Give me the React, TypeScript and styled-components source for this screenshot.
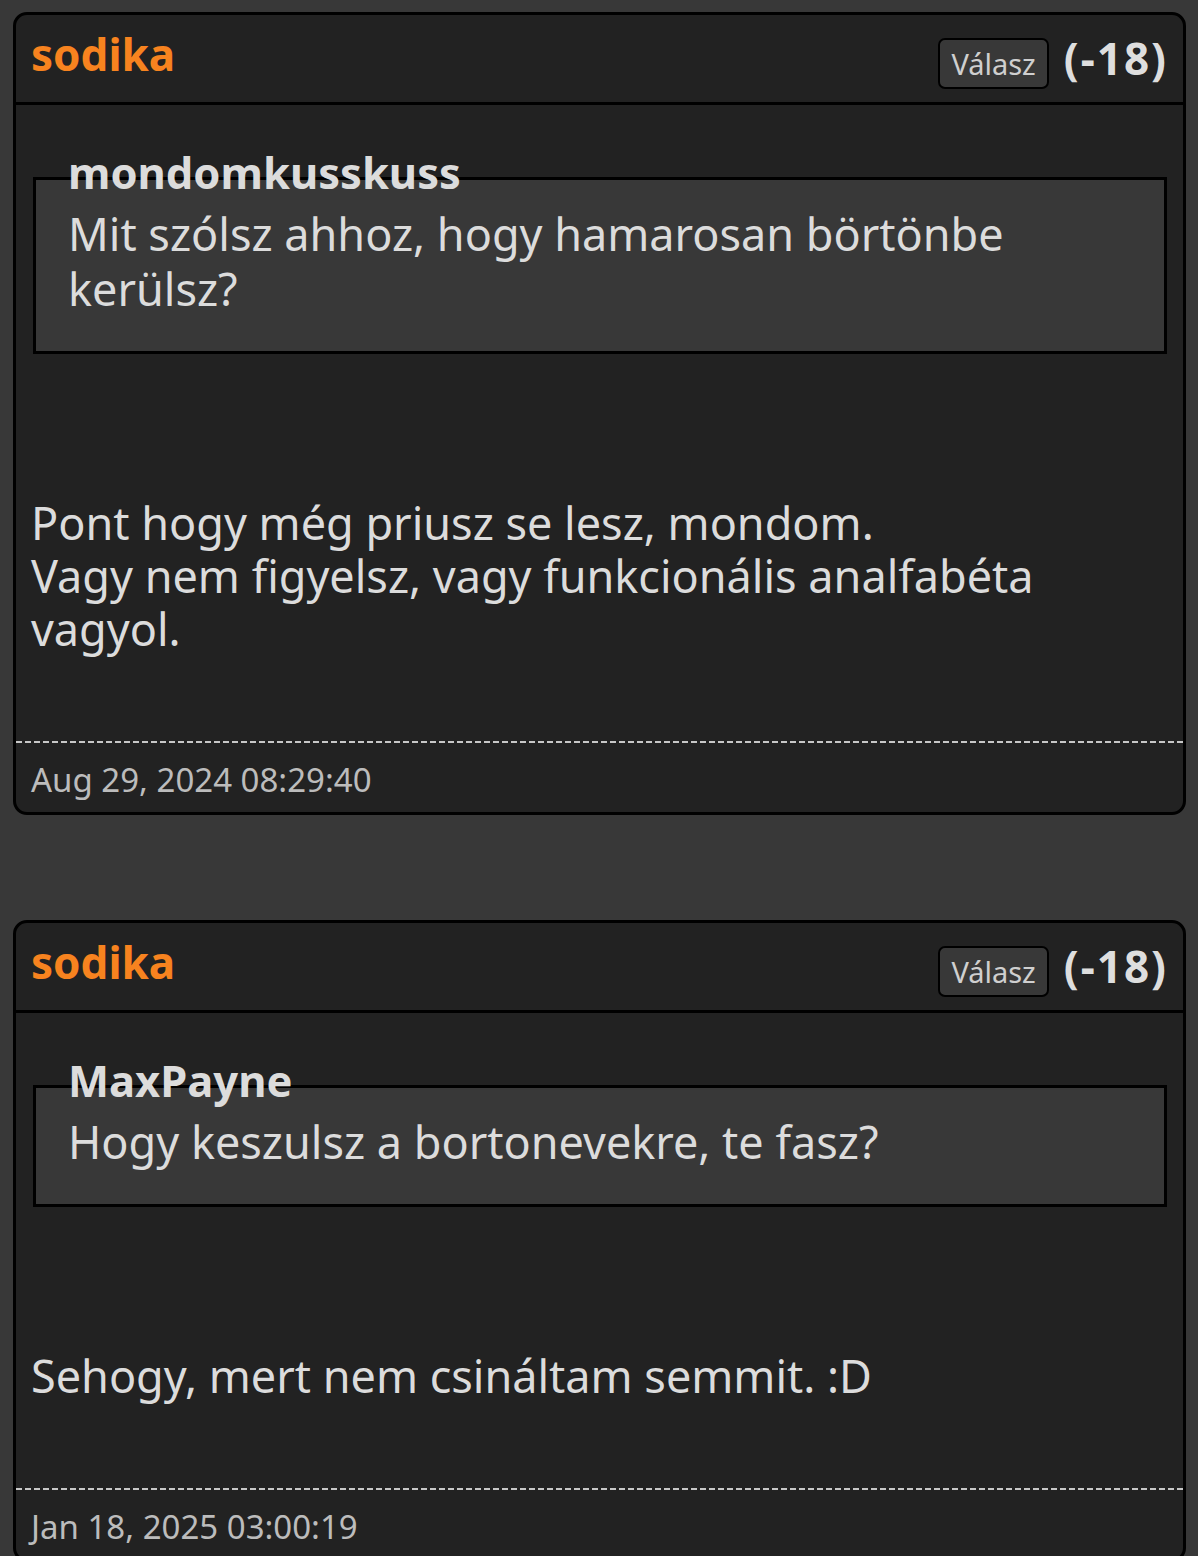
import React from "react";
import styled, { createGlobalStyle } from "styled-components";

const GlobalStyle = createGlobalStyle`
  html, body {
    margin: 0;
    padding: 0;
    background: #383838;
  }
  body {
    font-family: "Noto Sans", Roboto, "Liberation Sans", sans-serif;
    color: #dcdcdc;
  }
`;

const Page = styled.main`
  display: flex;
  flex-direction: column;
  gap: 105px;
  padding: 12px 12px 0 13px;
`;

const Card = styled.article`
  background: #222222;
  border: 3px solid #000;
  border-radius: 14px;
  overflow: hidden;
`;

const Header = styled.header`
  display: flex;
  align-items: center;
  height: 87px;
  padding: 0 15px 0 15px;
  border-bottom: 3px solid #000;
`;

const Author = styled.span`
  flex: 1;
  color: #f7831f;
  font-weight: 700;
  font-size: 44px;
  line-height: 44px;
  margin-bottom: 9px;
`;

const ReplyButton = styled.button`
  font-family: inherit;
  background: #383838;
  color: #cfcfcf;
  border: 2px solid #000;
  border-radius: 7px;
  font-size: 29px;
  line-height: 1;
  height: 51px;
  padding: 0 11px;
  margin-top: 9px;
  cursor: pointer;
`;

const Score = styled.span`
  color: #dedede;
  font-weight: 700;
  font-size: 44px;
  line-height: 44px;
  letter-spacing: 2px;
  margin-left: 15px;
  margin-bottom: 2px;
`;

const Body = styled.div`
  padding: 0 16px 0 15px;
`;

const QuoteAuthor = styled.div`
  font-weight: 700;
  font-size: 43.5px;
  line-height: 55px;
  color: #dcdcdc;
  margin: 40px 0 -23px 37px;
`;

const QuoteBox = styled.blockquote`
  margin: 0 0 0 2px;
  background: #383838;
  border: 3px solid #000;
  padding: 26px 30px 35px 32px;
  font-size: 45px;
  line-height: 55px;
  color: #dcdcdc;
`;

const Message = styled.p`
  margin: 142px 0 86px 0;
  font-size: 45px;
  line-height: 53px;
  color: #dcdcdc;
`;

const Divider = styled.div`
  height: 2px;
  margin: 0 -16px 0 -15px;
  background: repeating-linear-gradient(
    to right,
    #c8c8c8 0 6px,
    transparent 6px 9px
  );
`;

const Timestamp = styled.div`
  font-size: 33px;
  line-height: 40px;
  color: #bcbcbc;
  padding: 17px 0 12px 0;
`;

type Post = {
  author: string;
  score: string;
  quoteAuthor: string;
  quote: string;
  lines: string[];
  date: string;
};

const posts: Post[] = [
  {
    author: "sodika",
    score: "(-18)",
    quoteAuthor: "mondomkusskuss",
    quote: "Mit szólsz ahhoz, hogy hamarosan börtönbe kerülsz?",
    lines: [
      "Pont hogy még priusz se lesz, mondom.",
      "Vagy nem figyelsz, vagy funkcionális analfabéta vagyol.",
    ],
    date: "Aug 29, 2024 08:29:40",
  },
  {
    author: "sodika",
    score: "(-18)",
    quoteAuthor: "MaxPayne",
    quote: "Hogy keszulsz a bortonevekre, te fasz?",
    lines: ["Sehogy, mert nem csináltam semmit. :D"],
    date: "Jan 18, 2025 03:00:19",
  },
];

export default function App() {
  return (
    <>
      <GlobalStyle />
      <Page>
        {posts.map((p, i) => (
          <Card key={i}>
            <Header>
              <Author>{p.author}</Author>
              <ReplyButton>Válasz</ReplyButton>
              <Score>{p.score}</Score>
            </Header>
            <Body>
              <QuoteAuthor>{p.quoteAuthor}</QuoteAuthor>
              <QuoteBox>{p.quote}</QuoteBox>
              <Message>
                {p.lines.map((l, j) => (
                  <React.Fragment key={j}>
                    {j > 0 && <br />}
                    {l}
                  </React.Fragment>
                ))}
              </Message>
              <Divider />
              <Timestamp>{p.date}</Timestamp>
            </Body>
          </Card>
        ))}
      </Page>
    </>
  );
}
